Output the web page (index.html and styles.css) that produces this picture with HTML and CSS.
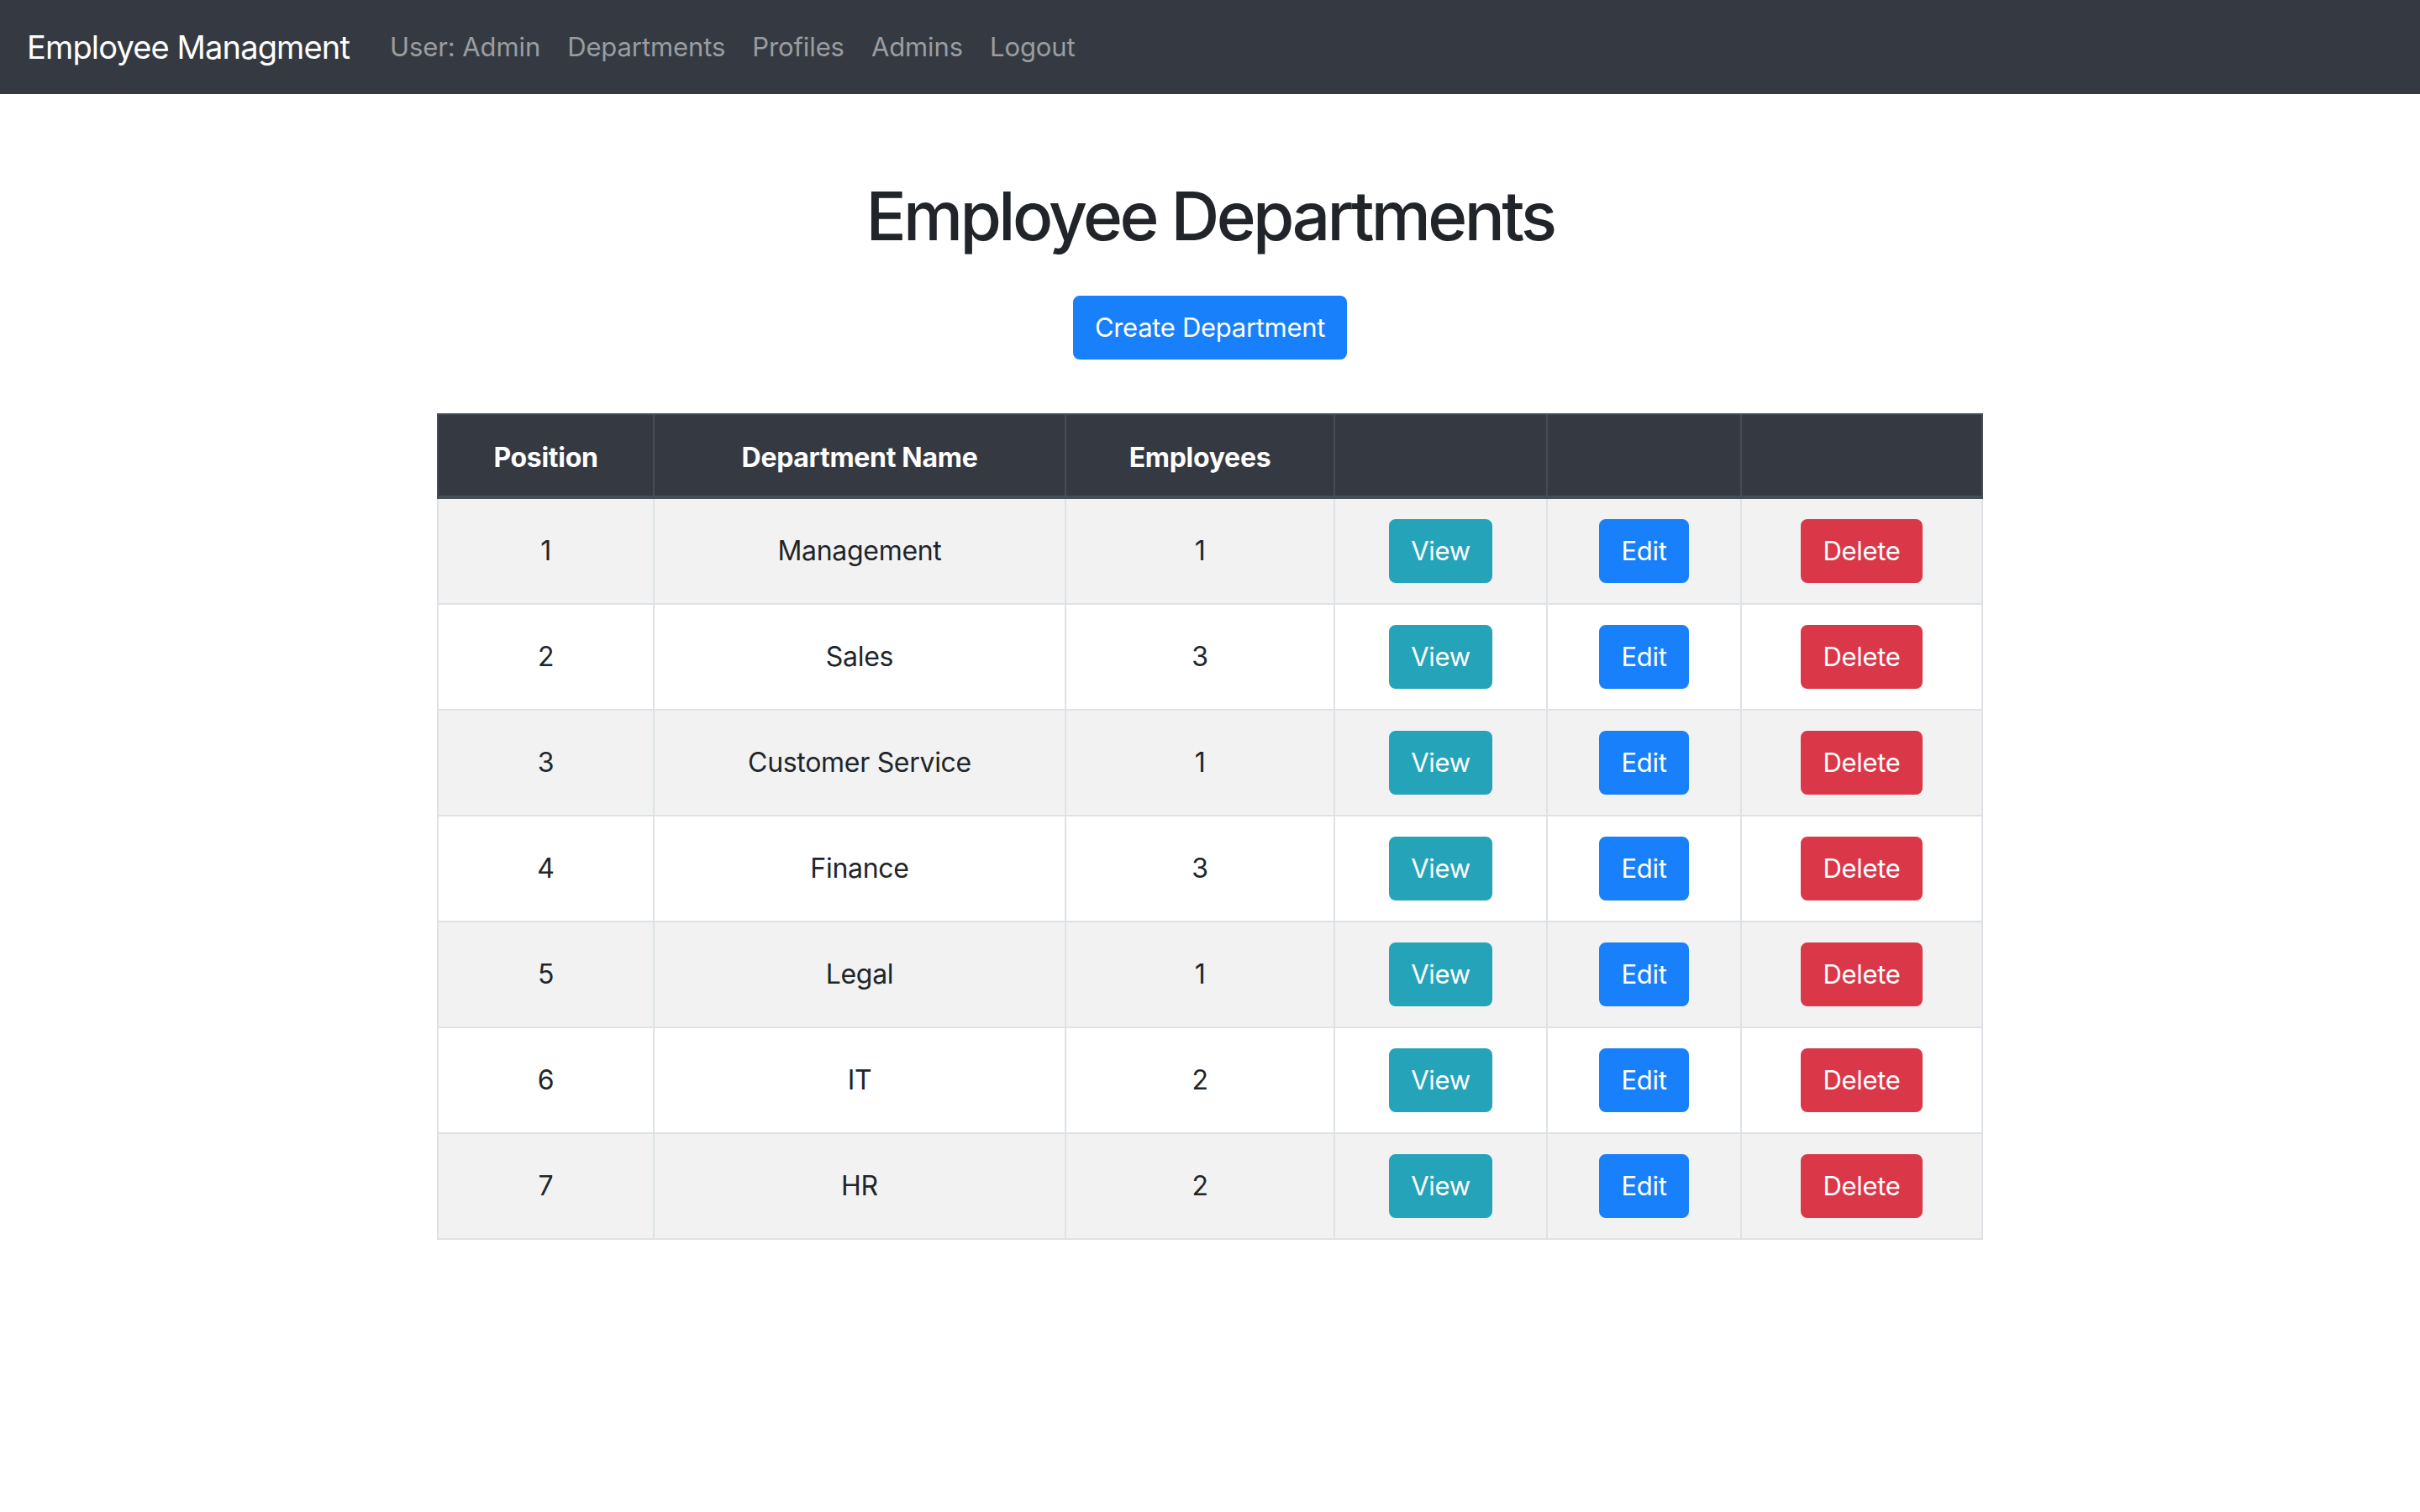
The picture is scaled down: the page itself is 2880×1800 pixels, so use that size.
FILE: index.html
```html
<!DOCTYPE html>
<html lang="en">
<head>
<meta charset="utf-8">
<title>Employee Departments</title>
<link rel="stylesheet" href="styles.css">
</head>
<body>
<nav class="navbar">
  <a class="brand" href="#">Employee Managment</a>
  <ul class="nav">
    <li><a class="nav-link" href="#">User: Admin</a></li>
    <li><a class="nav-link" href="#">Departments</a></li>
    <li><a class="nav-link" href="#">Profiles</a></li>
    <li><a class="nav-link" href="#">Admins</a></li>
    <li><a class="nav-link" href="#">Logout</a></li>
  </ul>
</nav>
<main class="main">
  <h1 class="title">Employee Departments</h1>
  <a class="btn btn-primary create" href="#">Create Department</a>
  <table class="table">
    <colgroup>
      <col class="c-pos"><col class="c-name"><col class="c-emp"><col class="c-view"><col class="c-edit"><col class="c-del">
    </colgroup>
    <thead>
      <tr><th>Position</th><th>Department Name</th><th>Employees</th><th></th><th></th><th></th></tr>
    </thead>
    <tbody>
      <tr><td>1</td><td>Management</td><td>1</td><td><a class="btn btn-info" href="#">View</a></td><td><a class="btn btn-primary" href="#">Edit</a></td><td><a class="btn btn-danger" href="#">Delete</a></td></tr>
      <tr><td>2</td><td>Sales</td><td>3</td><td><a class="btn btn-info" href="#">View</a></td><td><a class="btn btn-primary" href="#">Edit</a></td><td><a class="btn btn-danger" href="#">Delete</a></td></tr>
      <tr><td>3</td><td>Customer Service</td><td>1</td><td><a class="btn btn-info" href="#">View</a></td><td><a class="btn btn-primary" href="#">Edit</a></td><td><a class="btn btn-danger" href="#">Delete</a></td></tr>
      <tr><td>4</td><td>Finance</td><td>3</td><td><a class="btn btn-info" href="#">View</a></td><td><a class="btn btn-primary" href="#">Edit</a></td><td><a class="btn btn-danger" href="#">Delete</a></td></tr>
      <tr><td>5</td><td>Legal</td><td>1</td><td><a class="btn btn-info" href="#">View</a></td><td><a class="btn btn-primary" href="#">Edit</a></td><td><a class="btn btn-danger" href="#">Delete</a></td></tr>
      <tr><td>6</td><td>IT</td><td>2</td><td><a class="btn btn-info" href="#">View</a></td><td><a class="btn btn-primary" href="#">Edit</a></td><td><a class="btn btn-danger" href="#">Delete</a></td></tr>
      <tr><td>7</td><td>HR</td><td>2</td><td><a class="btn btn-info" href="#">View</a></td><td><a class="btn btn-primary" href="#">Edit</a></td><td><a class="btn btn-danger" href="#">Delete</a></td></tr>
    </tbody>
  </table>
</main>
</body>
</html>
```

FILE: styles.css
```css
html, body {
  margin: 0;
  padding: 0;
  background: #ffffff;
}
body {
  font-family: Inter, "Noto Sans", "Liberation Sans", sans-serif;
  font-size: 32px;
  line-height: 48px;
  color: #212529;
}
a { text-decoration: none; }

.navbar {
  display: flex;
  align-items: center;
  height: 112px;
  box-sizing: border-box;
  padding: 16px 32px;
  background: #353a42;
}
.brand {
  font-size: 38px;
  line-height: 60px;
  padding: 10px 0;
  margin-right: 32px;
  color: #ffffff;
  letter-spacing: -0.85px;
}
.nav {
  display: flex;
  list-style: none;
  margin: 0;
  padding: 0;
}
.nav-link {
  display: block;
  padding: 16px;
  font-size: 31px;
  color: #9a9da1;
  letter-spacing: -0.1px;
}

.main {
  display: flex;
  flex-direction: column;
  align-items: center;
  padding-top: 97px;
}
.title {
  margin: 0 0 47px;
  font-size: 80px;
  line-height: 96px;
  font-weight: 500;
  letter-spacing: -3.6px;
}
.btn {
  display: inline-block;
  padding: 12px 24px;
  border: 2px solid transparent;
  border-radius: 8px;
  font-size: 31px;
  line-height: 48px;
  color: #ffffff;
  letter-spacing: -0.3px;
  vertical-align: middle;
}
.btn-primary { background: #1880fb; border-color: #1880fb; }
.btn-info { background: #25a3b9; border-color: #25a3b9; }
.btn-danger { background: #da3849; border-color: #da3849; }
.create { margin-bottom: 64px; }

.table {
  width: 1840px;
  border-collapse: collapse;
  table-layout: fixed;
  border: 2px solid #dee2e6;
}
.c-pos { width: 257px; }
.c-name { width: 490px; }
.c-emp { width: 320px; }
.c-view { width: 253px; }
.c-edit { width: 231px; }
.c-del { width: 287px; }

.table th, .table td {
  padding: 24px;
  text-align: center;
  vertical-align: middle;
}
.table th {
  padding-top: 27px;
  padding-bottom: 21px;
  background: #353a42;
  color: #ffffff;
  font-weight: 700;
  border: 2px solid #454d55;
  border-bottom-width: 4px;
  letter-spacing: -0.3px;
}
.table td {
  border: 2px solid #dee2e6;
  letter-spacing: -0.3px;
}
.cell-text { position: relative; }
.table tbody tr:nth-child(odd) td {
  background: #f2f2f2;
}
```
